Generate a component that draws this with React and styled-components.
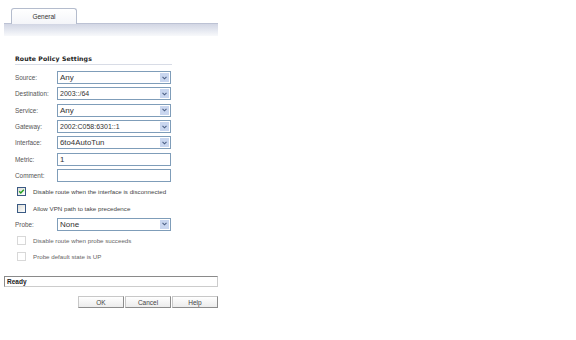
import React from "react";
import styled, { createGlobalStyle } from "styled-components";

const Global = createGlobalStyle`
  html, body { margin: 0; padding: 0; background: #fff; }
  body { font-family: "Liberation Sans", Arial, sans-serif; }
`;

const Page = styled.div`
  width: 576px;
  height: 340px;
  background: #fff;
  padding: 8px 0 0 4px;
  box-sizing: border-box;
`;

const Panel = styled.div`
  width: 214px;
  display: flex;
  flex-direction: column;
`;

const TabStrip = styled.div`
  display: flex;
  padding-left: 7px;
  height: 15px;
`;

const Tab = styled.div`
  width: 66px;
  height: 16px;
  box-sizing: border-box;
  border: 1px solid #b4bccd;
  border-bottom: none;
  border-radius: 3px 3px 0 0;
  background: linear-gradient(#ffffff, #f4f5f9);
  font-size: 6.5px;
  color: #333;
  display: flex;
  align-items: center;
  justify-content: center;
  padding-bottom: 1px;
  position: relative;
  z-index: 1;
`;

const Band = styled.div`
  height: 12px;
  border-top: 1px solid #bcc2d4;
  background: linear-gradient(#d2d6e4, #e6e9f1 55%, #f8f9fb);
`;

const Form = styled.div`
  padding: 19px 0 0 11px;
  width: 157px;
  display: flex;
  flex-direction: column;
`;

const Title = styled.div`
  font-family: "DejaVu Sans", Verdana, sans-serif;
  font-weight: bold;
  font-size: 6.2px;
  color: #222;
  padding-bottom: 2px;
  border-bottom: 1px solid #d8dce6;
  margin-bottom: 4.5px;
  letter-spacing: 0.1px;
`;

const Row = styled.div`
  display: flex;
  align-items: center;
  height: 16.3px;
`;

const Label = styled.div`
  width: 42px;
  font-size: 6.4px;
  color: #555;
`;

const Field = styled.div`
  width: 114px;
  height: 13px;
  box-sizing: border-box;
  border: 1px solid #7f9db9;
  background: #fff;
  display: flex;
  align-items: center;
  padding-left: 2px;
  font-size: ${(p) => p.fs || 8}px;
  color: #333;
  position: relative;
`;

const Arrow = styled.div`
  position: absolute;
  right: 1px;
  top: 1px;
  width: 9px;
  height: 9px;
  background: #c9d6ef;
  display: flex;
  align-items: center;
  justify-content: center;
`;

const CheckRow = styled.div`
  display: flex;
  align-items: center;
  height: 16.3px;
  padding-left: 2px;
`;

const Box = styled.div`
  width: 9px;
  height: 9px;
  box-sizing: border-box;
  border: 1px solid ${(p) => (p.disabled ? "#d8d8d8" : "#3a5a84")};
  background: ${(p) => (p.disabled ? "#fff" : "linear-gradient(135deg,#dcdcd6,#fff)")};
  display: flex;
  align-items: center;
  justify-content: center;
  margin-right: 7px;
`;

const CheckText = styled.div`
  font-size: 6.2px;
  color: ${(p) => (p.disabled ? "#666" : "#444")};
`;

const Status = styled.div`
  margin-top: 11px;
  height: 11px;
  box-sizing: border-box;
  border: 1px solid #8a8a8a;
  border-right-color: #ccc;
  border-bottom-color: #ccc;
  font-size: 6.5px;
  font-weight: bold;
  color: #222;
  display: flex;
  align-items: center;
  padding-left: 2px;
`;

const Buttons = styled.div`
  display: flex;
  justify-content: flex-end;
  gap: 1px;
  margin-top: 9px;
`;

const Button = styled.div`
  width: 46px;
  height: 12px;
  box-sizing: border-box;
  border: 1px solid #8c8c8c;
  border-top-color: #c8c8c8;
  border-left-color: #c8c8c8;
  background: linear-gradient(#ffffff, #ececec);
  font-size: 6.5px;
  color: #444;
  display: flex;
  align-items: center;
  justify-content: center;
`;

const Chevron = () => (
  <svg width="5" height="4" viewBox="0 0 5 4">
    <path d="M0.5 0.8 L2.5 2.8 L4.5 0.8" fill="none" stroke="#4d6185" strokeWidth="1.1" />
  </svg>
);

const Check = () => (
  <svg width="7" height="7" viewBox="0 0 7 7">
    <path d="M1.2 3.3 L2.8 5 L5.8 1.8" fill="none" stroke="#21a121" strokeWidth="1.4" />
  </svg>
);

const Select = ({ value, fs }) => (
  <Field fs={fs}>
    {value}
    <Arrow>
      <Chevron />
    </Arrow>
  </Field>
);

export default function App() {
  return (
    <Page>
      <Global />
      <Panel>
        <TabStrip>
          <Tab>General</Tab>
        </TabStrip>
        <Band />
        <Form>
          <Title>Route Policy Settings</Title>
          <Row>
            <Label>Source:</Label>
            <Select value="Any" />
          </Row>
          <Row>
            <Label>Destination:</Label>
            <Select value="2003::/64" fs={7} />
          </Row>
          <Row>
            <Label>Service:</Label>
            <Select value="Any" />
          </Row>
          <Row>
            <Label>Gateway:</Label>
            <Select value="2002:C058:6301::1" fs={7} />
          </Row>
          <Row>
            <Label>Interface:</Label>
            <Select value="6to4AutoTun" fs={7.8} />
          </Row>
          <Row>
            <Label>Metric:</Label>
            <Field fs={7.8}>1</Field>
          </Row>
          <Row>
            <Label>Comment:</Label>
            <Field />
          </Row>
          <CheckRow>
            <Box>
              <Check />
            </Box>
            <CheckText>Disable route when the interface is disconnected</CheckText>
          </CheckRow>
          <CheckRow>
            <Box />
            <CheckText>Allow VPN path to take precedence</CheckText>
          </CheckRow>
          <Row>
            <Label>Probe:</Label>
            <Select value="None" />
          </Row>
          <CheckRow>
            <Box disabled />
            <CheckText disabled>Disable route when probe succeeds</CheckText>
          </CheckRow>
          <CheckRow>
            <Box disabled />
            <CheckText disabled>Probe default state is UP</CheckText>
          </CheckRow>
        </Form>
        <Status>Ready</Status>
        <Buttons>
          <Button>OK</Button>
          <Button>Cancel</Button>
          <Button>Help</Button>
        </Buttons>
      </Panel>
    </Page>
  );
}
